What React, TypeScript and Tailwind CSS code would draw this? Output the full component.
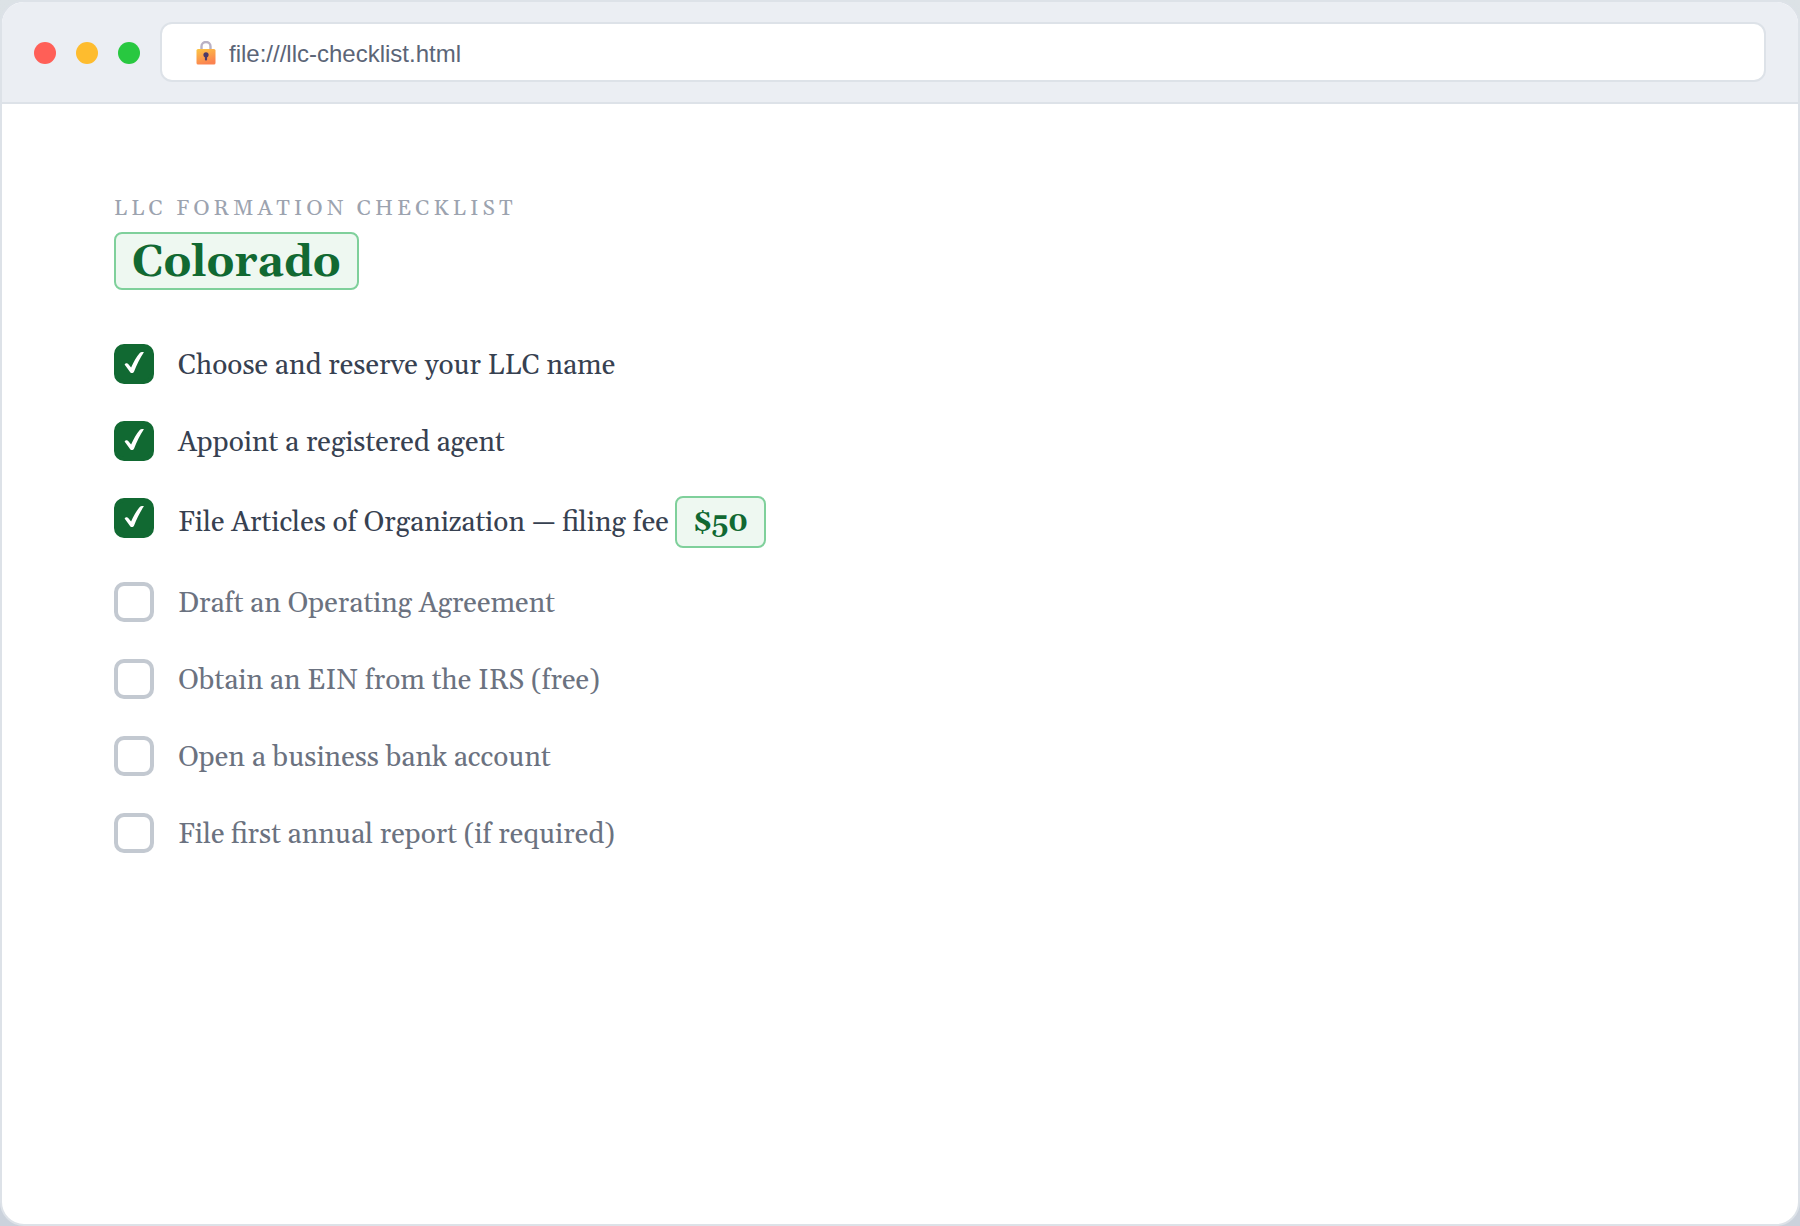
import { useState, type ReactNode } from "react";

type Item = { id: string; label: ReactNode; done: boolean };

const initialItems: Item[] = [
  { id: "name", label: "Choose and reserve your LLC name", done: true },
  { id: "agent", label: "Appoint a registered agent", done: true },
  {
    id: "articles",
    label: (
      <>
        File Articles of Organization — filing fee{" "}
        <strong className="mb-[3px] inline-block rounded-lg border-2 border-[#7fd09b] bg-[#eef8f1] px-4 pt-[3px] leading-[45px] font-bold text-[#116932]">
          $50
        </strong>
      </>
    ),
    done: true,
  },
  { id: "agreement", label: "Draft an Operating Agreement", done: false },
  { id: "ein", label: "Obtain an EIN from the IRS (free)", done: false },
  { id: "bank", label: "Open a business bank account", done: false },
  { id: "report", label: "File first annual report (if required)", done: false },
];

function LockIcon() {
  return (
    <svg viewBox="0 0 20 24" className="mt-0.5 h-6 w-5 shrink-0" aria-hidden="true">
      <defs>
        <linearGradient id="lock-body" x1="0" y1="0" x2="0.4" y2="1">
          <stop offset="0" stopColor="#fcc644" />
          <stop offset="1" stopColor="#fb8350" />
        </linearGradient>
      </defs>
      <path d="M5.5 9V5.5a4.500 4.500 0 0 1 9 0V9" fill="none" stroke="#b9b1c4" strokeWidth="2.4" />
      <rect x="0.5" y="8" width="19" height="15.5" rx="1.5" fill="url(#lock-body)" />
      <circle cx="10" cy="13.8" r="2.6" fill="#4b3a68" />
      <rect x="8.9" y="14" width="2.2" height="5.6" rx="1" fill="#4b3a68" />
    </svg>
  );
}

function CheckMark() {
  return (
    <svg
      viewBox="0 0 40 40"
      className="pointer-events-none col-start-1 row-start-1 hidden size-10 peer-checked:block"
      aria-hidden="true"
    >
      <path
        d="M10.6 20.6c.8-1.500 2.600-1.900 3.600-.7l2.900 3.600C19.600 17.800 22.500 12.600 25.800 8.900c1-1 3-1 4.100-.7C26 14 22.800 20.600 20 27.800c-.7 1.600-2.900 1.700-3.800.4z"
        fill="#fff"
      />
    </svg>
  );
}

export default function App() {
  const [items, setItems] = useState(initialItems);
  const toggle = (id: string) =>
    setItems((list) => list.map((i) => (i.id === id ? { ...i, done: !i.done } : i)));

  return (
    <div className="min-h-screen bg-linear-to-b from-[#dce2e6] to-[#cbd2dc]">
      <div className="flex min-h-screen flex-col overflow-hidden rounded-3xl border-2 border-[#dde2e8] bg-white">
        <header className="flex items-center gap-5 border-b-2 border-[#dde2e8] bg-[#ebeef3] px-8 py-5">
          <button type="button" aria-label="Close" className="mt-0.5 size-[22px] rounded-full bg-[#ff5f57]" />
          <button type="button" aria-label="Minimize" className="mt-0.5 size-[22px] rounded-full bg-[#febc2e]" />
          <button type="button" aria-label="Maximize" className="mt-0.5 size-[22px] rounded-full bg-[#28c840]" />
          <label className="flex h-[60px] flex-1 items-center gap-[13px] rounded-xl border-2 border-[#dde2e8] bg-white px-[34px]">
            <LockIcon />
            <input
              type="text"
              aria-label="Address"
              defaultValue="file:///llc-checklist.html"
              className="min-w-0 flex-1 bg-transparent pt-[3px] font-['Liberation_Sans',Arial,sans-serif] text-2xl text-[#5b6577] outline-none"
            />
          </label>
        </header>
        <main className="flex-1 px-28 pt-[89px] pb-16 font-[Georgia,Gelasio,'Liberation_Serif',serif]">
          <p className="text-[22px] leading-8 tracking-[4px] text-[#9ca3af] uppercase">LLC Formation Checklist</p>
          <h1 className="mt-[7px] flex">
            <span className="rounded-lg border-2 border-[#7fd09b] bg-[#eef8f1] px-4 pt-1 text-[44px] leading-[50px] font-bold text-[#116932]">
              Colorado
            </span>
          </h1>
          <ul className="mt-[52px] flex flex-col gap-[29px]">
            {items.map((item) => (
              <li key={item.id}>
                <label className="flex items-start gap-6">
                  <span className="mt-0.5 grid shrink-0">
                    <input
                      type="checkbox"
                      checked={item.done}
                      onChange={() => toggle(item.id)}
                      className="peer col-start-1 row-start-1 size-10 appearance-none rounded-[10px] border-4 border-[#c3c9d1] bg-white checked:border-[#116932] checked:bg-[#116932]"
                    />
                    <CheckMark />
                  </span>
                  <span
                    className={
                      item.done
                        ? "text-[28px] leading-[48px] text-[#374151]"
                        : "text-[28px] leading-[48px] text-[#6b7280]"
                    }
                  >
                    {item.label}
                  </span>
                </label>
              </li>
            ))}
          </ul>
        </main>
      </div>
    </div>
  );
}
